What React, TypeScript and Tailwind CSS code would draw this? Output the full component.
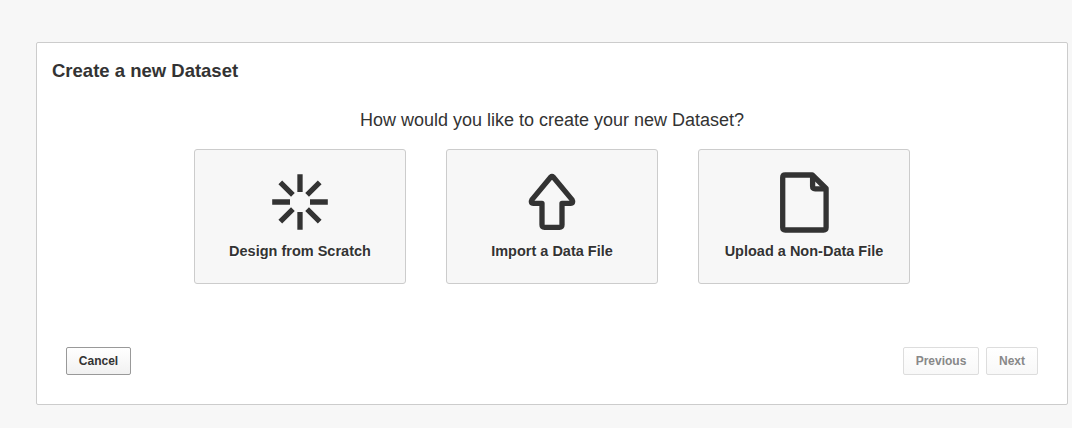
import type { ReactNode } from "react";

function ScratchIcon() {
  return (
    <svg width="64" height="64" viewBox="0 0 64 64" fill="none" stroke="#333" strokeWidth="5.3">
      <path d="M32 4.2V22M32 42v17.8M4.2 32H22M42 32h17.8M12.3 12.3L24.9 24.9M39.1 39.1l12.6 12.6M51.7 12.3L39.1 24.9M24.9 39.1L12.3 51.7" />
    </svg>
  );
}

function ImportIcon() {
  return (
    <svg width="64" height="64" viewBox="0 0 64 64" fill="none" stroke="#333" strokeWidth="5.3" strokeLinejoin="round">
      <path d="M30.6 7.3Q32 6 33.4 7.3L52 29.6Q54 33.3 50.5 33.3H42V54.8Q42 57.3 39.5 57.3H24.5Q22 57.3 22 54.8V33.3H13.5Q10 33.3 12 29.6Z" />
    </svg>
  );
}

function FileIcon() {
  return (
    <svg width="64" height="64" viewBox="4 0 64 64" fill="none" stroke="#333" strokeWidth="5.3" strokeLinejoin="round">
      <path d="M17.2 5H44.3L58.1 18.5V57.5Q58.1 60 55.6 60H17.2Q14.7 60 14.7 57.5V7.5Q14.7 5 17.2 5Z" />
      <path d="M44.6 5V16.3Q44.6 18.8 47.1 18.8H58" />
    </svg>
  );
}

function Choice({ label, children }: { label: string; children: ReactNode }) {
  return (
    <button className="flex h-[135px] w-[212px] flex-col items-center rounded-[3px] border border-[#ccc] bg-[#f7f7f7] pt-5 text-[14.5px] leading-5 font-bold text-[#333] [text-shadow:1px_1px_0_#fff]">
      {children}
      <span className="mt-[7px]">{label}</span>
    </button>
  );
}

const buttonClass =
  "h-7 rounded-[2px] border border-[#999] bg-linear-to-b from-white to-[#f1f1f1] text-xs leading-4 font-bold text-[#333] disabled:border-[#ddd] disabled:to-[#f8f8f8] disabled:text-[#888]";

export default function App() {
  return (
    <div className="h-[428px] bg-[#f7f7f7] pt-[42px] pl-9 font-['Liberation_Sans',Arial,sans-serif] text-[#333]">
      <main className="flex h-[363px] w-[1032px] flex-col rounded-[2px] border border-[#ccc] bg-white">
        <h1 className="mt-4 ml-[15px] text-[18.5px] leading-6 font-bold">Create a new Dataset</h1>
        <h2 className="mt-[25px] text-center text-lg leading-6">How would you like to create your new Dataset?</h2>
        <div className="mt-[17px] flex justify-center gap-10">
          <Choice label="Design from Scratch"><ScratchIcon /></Choice>
          <Choice label="Import a Data File"><ImportIcon /></Choice>
          <Choice label="Upload a Non-Data File"><FileIcon /></Choice>
        </div>
        <div className="mt-[63px] flex px-[29px]">
          <button className={`${buttonClass} w-[65px]`}>Cancel</button>
          <div className="ml-auto flex gap-[7px]">
            <button disabled className={`${buttonClass} w-[76px]`}>Previous</button>
            <button disabled className={`${buttonClass} w-[52px]`}>Next</button>
          </div>
        </div>
      </main>
    </div>
  );
}
